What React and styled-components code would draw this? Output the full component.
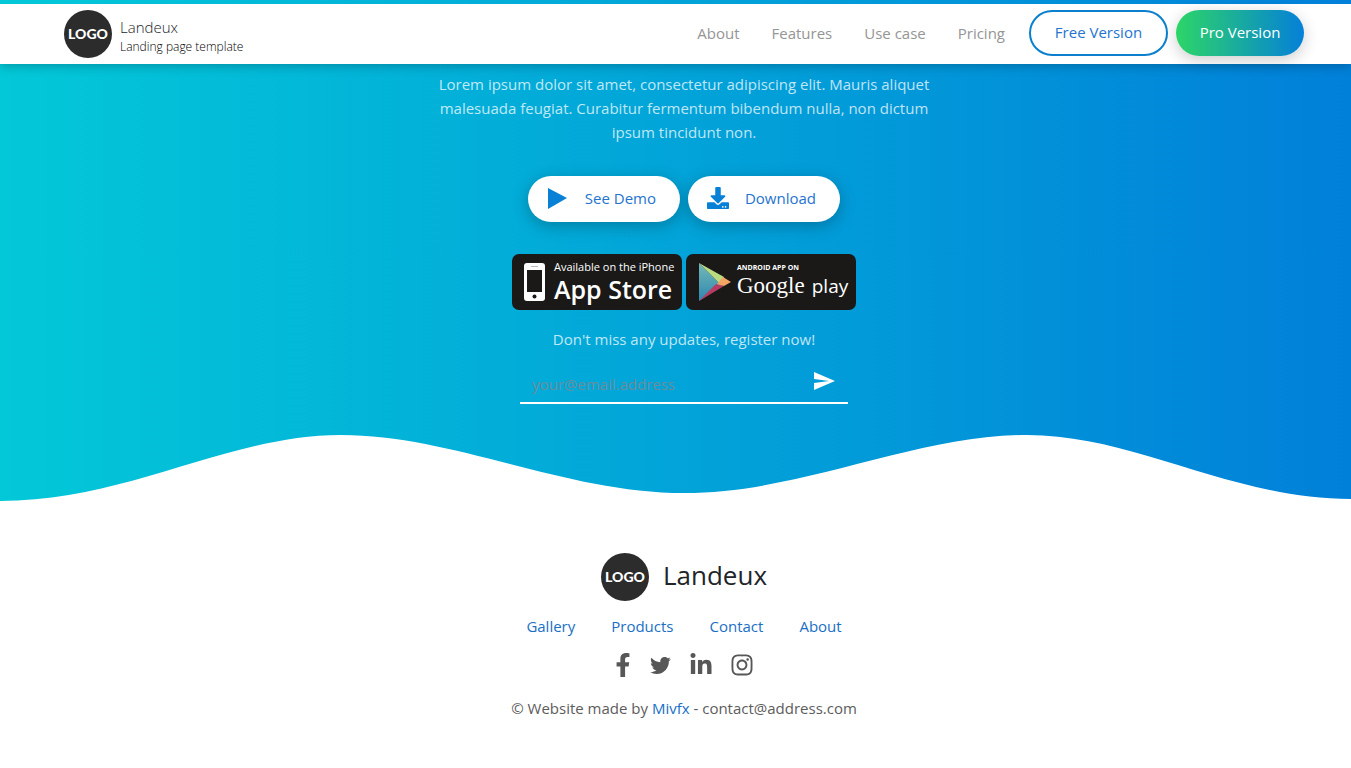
import React from 'react';
import styled, { createGlobalStyle, css } from 'styled-components';
import { FaDownload, FaFacebookF, FaTwitter, FaLinkedinIn, FaInstagram } from 'react-icons/fa';
import { MdSend } from 'react-icons/md';

const GlobalStyle = createGlobalStyle`
  *, *::before, *::after { box-sizing: border-box; }
  body {
    margin: 0;
    background: #fff;
    color: #212529;
    font-family: 'Segoe UI', 'Open Sans', 'Noto Sans', sans-serif;
    font-size: 15px;
    line-height: 24px;
    overflow-x: hidden;
  }
  a { text-decoration: none; }
  p { margin: 0; }
`;

const brandGradient = 'linear-gradient(90deg, #03c8d8, #0180d9)';

const Header = styled.header`
  position: sticky;
  top: 0;
  z-index: 2;
  box-shadow: 0 2px 10px rgba(0, 0, 0, 0.25);
`;

const AccentStrip = styled.div`
  height: 4px;
  background: ${brandGradient};
`;

const Bar = styled.div`
  display: flex;
  align-items: center;
  justify-content: space-between;
  height: 60px;
  padding: 0 47px 0 64px;
  background: #fff;
`;

const Brand = styled.a`
  display: flex;
  align-items: center;
  gap: 8px;
  color: #212529;
`;

const Logo = styled.span`
  display: flex;
  align-items: center;
  justify-content: center;
  width: 48px;
  height: 48px;
  border-radius: 50%;
  background: #2c2c2c;
  color: #fff;
  font: 900 14px/16px Lato, sans-serif;
`;

const BrandText = styled.span`
  display: flex;
  flex-direction: column;
  font-weight: 300;
  line-height: 20px;
  padding-top: 5px;
`;

const Tagline = styled.small`
  color: #000;
  font-size: 12px;
`;

const Nav = styled.nav`
  display: flex;
  align-items: center;
  gap: 8px;
  padding-bottom: 2px;
`;

const NavLinks = styled.div`
  display: flex;
`;

const NavLink = styled.a`
  padding: 0 16px;
  color: #959595;
`;

const Pill = styled.button`
  display: flex;
  align-items: center;
  justify-content: center;
  height: 46px;
  min-width: ${({ $width }) => $width}px;
  padding: 0 0 2px;
  border: 0;
  border-radius: 23px;
  background: #fff;
  color: #2474cf;
  font: inherit;
  cursor: pointer;
  ${({ $variant }) =>
    $variant === 'outline' &&
    css`
      border: 2px solid #0c80cf;
    `}
  ${({ $variant }) =>
    $variant === 'gradient' &&
    css`
      background: linear-gradient(90deg, #2dd567, #0580d8);
      color: #fff;
      box-shadow: 0 4px 16px rgba(0, 0, 0, 0.2);
    `}
  ${({ $variant }) =>
    $variant === 'raised' &&
    css`
      justify-content: space-between;
      padding: 0 24px 2px 19px;
      box-shadow: 0 4px 16px rgba(0, 0, 0, 0.25);
      svg { color: #0780d6; }
    `}
`;

const Hero = styled.section`
  background: ${brandGradient};
  color: rgba(255, 255, 255, 0.75);
`;

const HeroContent = styled.div`
  display: flex;
  flex-direction: column;
  align-items: center;
  padding: 8px 0 31px 17px;
  text-align: center;
`;

const Lead = styled.p`
  max-width: 512px;
`;

const ButtonRow = styled.div`
  display: flex;
  gap: 8px;
  margin: 32px 0;
`;

const BadgeRow = styled.div`
  display: flex;
  gap: 4px;
  margin-bottom: 17px;
`;

const Badge = styled.a`
  display: flex;
  align-items: center;
  gap: ${({ $gap }) => $gap}px;
  width: 170px;
  height: 56px;
  padding-left: 12px;
  border-radius: 7px;
  background: #1a1918;
  color: #fff;
  text-align: left;
  white-space: nowrap;
  svg { flex: none; }
`;

const BadgeText = styled.span`
  display: flex;
  flex-direction: column;
`;

const BadgeCaption = styled.span`
  font-size: ${({ $small }) => ($small ? 7 : 11)}px;
  font-weight: ${({ $small }) => ($small ? 700 : 400)};
  line-height: ${({ $small }) => ($small ? 8 : 14)}px;
`;

const AppStoreName = styled.span`
  font-size: 25px;
  font-weight: 600;
  line-height: 30px;
`;

const PlayName = styled.span`
  display: flex;
  gap: 7px;
  font-size: 19px;
  line-height: 28px;
`;

const GoogleWord = styled.span`
  font-family: 'Liberation Serif', serif;
  font-size: 23px;
`;

const Signup = styled.form`
  display: flex;
  align-items: flex-start;
  width: 328px;
  height: 47px;
  margin-top: 6px;
  border-bottom: 2px solid #fff;
`;

const EmailInput = styled.input`
  flex: 1;
  min-width: 0;
  height: 38px;
  margin-top: 8px;
  padding: 0 12px;
  border: 0;
  outline: 0;
  background: transparent;
  color: #fff;
  font: inherit;
  &::placeholder { color: #6c8c9c; opacity: 1; }
`;

const SendButton = styled.button`
  display: flex;
  padding: 12px;
  border: 0;
  background: none;
  color: #fff;
  cursor: pointer;
`;

const Wave = styled.svg`
  display: block;
  width: 100%;
  height: 67px;
`;

const Footer = styled.footer`
  display: flex;
  flex-direction: column;
  align-items: center;
  padding: 51px 0 47px 17px;
  color: #5c5c5c;
`;

const FooterBrand = styled.div`
  display: flex;
  align-items: center;
  gap: 14px;
  color: #212529;
  font-size: 26px;
  line-height: 44px;
`;

const FooterName = styled.span`
  padding-bottom: 4px;
`;

const FooterLinks = styled.nav`
  display: flex;
  gap: 36px;
  margin-top: 13px;
`;

const TextLink = styled.a`
  color: #1a6fc6;
`;

const Social = styled.div`
  display: flex;
  align-items: center;
  gap: 20px;
  margin: 15px 0 19px;
`;

const SocialLink = styled.a`
  display: flex;
  align-items: center;
  justify-content: center;
  width: ${({ $width }) => $width}px;
  height: 24px;
  color: #575757;
  svg { flex: none; }
`;

const links = ['About', 'Features', 'Use case', 'Pricing'];
const footerLinks = ['Gallery', 'Products', 'Contact', 'About'];
const social = [
  { name: 'Facebook', Icon: FaFacebookF, size: 24, width: 14 },
  { name: 'Twitter', Icon: FaTwitter, size: 21, width: 21 },
  { name: 'LinkedIn', Icon: FaLinkedinIn, size: 24, width: 21 },
  { name: 'Instagram', Icon: FaInstagram, size: 24, width: 21 },
];

export default function App() {
  return (
    <>
      <GlobalStyle />
      <Header>
        <AccentStrip />
        <Bar>
          <Brand href="#">
            <Logo>LOGO</Logo>
            <BrandText>
              Landeux
              <Tagline>Landing page template</Tagline>
            </BrandText>
          </Brand>
          <Nav>
            <NavLinks>
              {links.map((label) => (
                <NavLink href="#" key={label}>{label}</NavLink>
              ))}
            </NavLinks>
            <Pill $variant="outline" $width={139}>Free Version</Pill>
            <Pill $variant="gradient" $width={128}>Pro Version</Pill>
          </Nav>
        </Bar>
      </Header>
      <main>
        <Hero>
          <HeroContent>
            <Lead>
              Lorem ipsum dolor sit amet, consectetur adipiscing elit. Mauris aliquet malesuada
              feugiat. Curabitur fermentum bibendum nulla, non dictum ipsum tincidunt non.
            </Lead>
            <ButtonRow>
              <Pill $variant="raised" $width={152}>
                <svg width="20" height="22" viewBox="0 0 20 22" aria-hidden="true">
                  <path d="M1 1L20 11L1 22Z" fill="currentColor" />
                </svg>
                See Demo
              </Pill>
              <Pill $variant="raised" $width={152}>
                <FaDownload size={22} aria-hidden="true" />
                Download
              </Pill>
            </ButtonRow>
            <BadgeRow>
              <Badge href="#" $gap={9}>
                <svg width="21" height="38" viewBox="0 0 21 38" aria-hidden="true">
                  <rect width="21" height="38" rx="3" fill="#fff" />
                  <rect x="3" y="7" width="15" height="22" fill="#1a1918" />
                  <rect x="7" y="3" width="7" height="1" fill="#bbb" />
                  <circle cx="10.5" cy="33.5" r="2" fill="#1a1918" />
                </svg>
                <BadgeText>
                  <BadgeCaption>Available on the iPhone</BadgeCaption>
                  <AppStoreName>App Store</AppStoreName>
                </BadgeText>
              </Badge>
              <Badge href="#" $gap={6}>
                <svg width="33" height="38" viewBox="0 0 33 38" aria-hidden="true">
                  <defs>
                    <linearGradient id="playBlue" x1="0" y1="0" x2="0" y2="1">
                      <stop offset="0" stopColor="#73b9b8" />
                      <stop offset="1" stopColor="#2e87b0" />
                    </linearGradient>
                  </defs>
                  <path d="M1 0L24 23L1 38Z" fill="url(#playBlue)" />
                  <path d="M1 0L26 14L24 23Z" fill="#b9dc83" />
                  <path d="M1 38L18 21L26 23Z" fill="#b83b62" />
                  <path d="M25 14L33 19L26 23L19 21Z" fill="#f4a463" />
                </svg>
                <BadgeText>
                  <BadgeCaption $small>ANDROID APP ON</BadgeCaption>
                  <PlayName>
                    <GoogleWord>Google</GoogleWord>
                    play
                  </PlayName>
                </BadgeText>
              </Badge>
            </BadgeRow>
            <label htmlFor="email">Don't miss any updates, register now!</label>
            <Signup onSubmit={(event) => event.preventDefault()}>
              <EmailInput id="email" type="email" placeholder="your@email.address" />
              <SendButton type="submit" aria-label="Register">
                <MdSend size={24} aria-hidden="true" />
              </SendButton>
            </Signup>
          </HeroContent>
          <Wave viewBox="0 0 1351 67" preserveAspectRatio="none" aria-hidden="true">
            <path
              d="M0 66C128 66 228 0 341 0C454 0 565 58 684 58C803 58 914 0 1027 0C1135 0 1231 64 1351 64V67H0Z"
              fill="#fff"
            />
          </Wave>
        </Hero>
      </main>
      <Footer>
        <FooterBrand>
          <Logo>LOGO</Logo>
          <FooterName>Landeux</FooterName>
        </FooterBrand>
        <FooterLinks>
          {footerLinks.map((label) => (
            <TextLink href="#" key={label}>{label}</TextLink>
          ))}
        </FooterLinks>
        <Social>
          {social.map(({ name, Icon, size, width }) => (
            <SocialLink href="#" aria-label={name} key={name} $width={width}>
              <Icon size={size} />
            </SocialLink>
          ))}
        </Social>
        <p>
          © Website made by <TextLink href="#">Mivfx</TextLink> - contact@address.com
        </p>
      </Footer>
    </>
  );
}
